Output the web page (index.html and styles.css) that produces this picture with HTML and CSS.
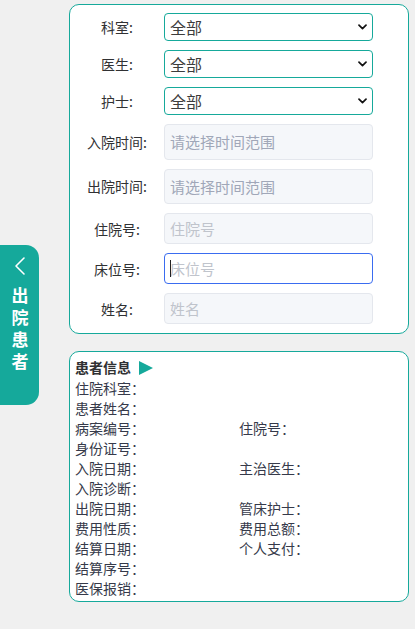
FILE: index.html
```html
<!DOCTYPE html>
<html lang="zh-CN">
<head>
<meta charset="utf-8">
<title>出院患者</title>
<link rel="stylesheet" href="styles.css">
</head>
<body>
<aside class="drawer-tab">
  <svg class="drawer-tab__icon" width="12" height="20" viewBox="0 0 12 20" aria-hidden="true">
    <polyline points="10,2 2,10 10,18" fill="none" stroke="#fff" stroke-width="1.6" stroke-linecap="round" stroke-linejoin="round"/>
  </svg>
  <div class="drawer-tab__text">出院患者</div>
</aside>

<main class="page">
  <form class="card filter">
    <label class="filter__label">科室:</label>
    <select class="filter__select"><option>全部</option></select>

    <label class="filter__label">医生:</label>
    <select class="filter__select"><option>全部</option></select>

    <label class="filter__label">护士:</label>
    <select class="filter__select"><option>全部</option></select>

    <label class="filter__label">入院时间:</label>
    <input class="filter__input filter__input--range" placeholder="请选择时间范围">

    <label class="filter__label">出院时间:</label>
    <input class="filter__input filter__input--range" placeholder="请选择时间范围">

    <label class="filter__label">住院号:</label>
    <input class="filter__input" placeholder="住院号">

    <label class="filter__label">床位号:</label>
    <span class="filter__field">
      <input class="filter__input filter__input--active" placeholder="床位号">
      <span class="filter__caret"></span>
    </span>

    <label class="filter__label">姓名:</label>
    <input class="filter__input" placeholder="姓名">
  </form>

  <section class="card info">
    <h3 class="info__title">患者信息 <span class="info__arrow"></span></h3>
    <div class="info__grid">
      <div class="info__item info__item--wide">住院科室：</div>
      <div class="info__item info__item--wide">患者姓名：</div>
      <div class="info__item">病案编号：</div>
      <div class="info__item">住院号：</div>
      <div class="info__item info__item--wide">身份证号：</div>
      <div class="info__item">入院日期：</div>
      <div class="info__item">主治医生：</div>
      <div class="info__item info__item--wide">入院诊断：</div>
      <div class="info__item">出院日期：</div>
      <div class="info__item">管床护士：</div>
      <div class="info__item">费用性质：</div>
      <div class="info__item">费用总额：</div>
      <div class="info__item">结算日期：</div>
      <div class="info__item">个人支付：</div>
      <div class="info__item info__item--wide">结算序号：</div>
      <div class="info__item info__item--wide">医保报销：</div>
    </div>
  </section>
</main>
</body>
</html>
```

FILE: styles.css
```css
* {
  box-sizing: border-box;
}

html,
body {
  margin: 0;
  padding: 0;
  background: #f0f0f0;
  font-family: "Noto Sans CJK SC", "Noto Sans", sans-serif;
  font-size: 14px;
  color: #303133;
}

/* side drawer toggle */
.drawer-tab {
  position: fixed;
  left: 0;
  top: 245px;
  width: 39px;
  height: 160px;
  background: #15a99b;
  border-radius: 0 13px 13px 0;
  display: flex;
  flex-direction: column;
  align-items: center;
  padding-top: 11px;
}

.drawer-tab__icon {
  display: block;
  margin-left: 1px;
}

.drawer-tab__text {
  writing-mode: vertical-rl;
  text-orientation: upright;
  margin-top: 11px;
  color: #fff;
  font-weight: 700;
  font-size: 17px;
  line-height: 20px;
  letter-spacing: 5px;
}

/* main column */
.page {
  padding: 4px 0 0 69px;
  width: 409px;
  display: flex;
  flex-direction: column;
  gap: 17px;
}

.card {
  background: #fff;
  border: 1px solid #16a99b;
  border-radius: 10px;
}

/* filter form */
.filter {
  margin: 0;
  padding: 8px 0 9px 0;
  display: grid;
  grid-template-columns: 94px 209px;
  row-gap: 9px;
  align-items: center;
}

.filter__label {
  text-align: center;
  color: #303133;
  line-height: 20px;
}

.filter__select {
  -webkit-appearance: none;
  appearance: none;
  height: 28px;
  width: 209px;
  border: 1px solid #16a99b;
  border-radius: 4px;
  background: #fff url("data:image/svg+xml,%3Csvg xmlns='http://www.w3.org/2000/svg' width='9' height='6' viewBox='0 0 9 6'%3E%3Cpolyline points='1,1.2 4.5,4.6 8,1.2' fill='none' stroke='%23111' stroke-width='1.7' stroke-linecap='round' stroke-linejoin='round'/%3E%3C/svg%3E") no-repeat right 5px center;
  color: #3c3c3c;
  font-family: inherit;
  font-size: 16px;
  line-height: 26px;
  padding: 0 20px 0 5px;
  margin: 0;
}

.filter__input {
  display: block;
  width: 209px;
  height: 31px;
  margin: 0;
  padding: 0 5px;
  border: 1px solid #e4e7ed;
  border-radius: 4px;
  background: #f5f7fa;
  font-family: inherit;
  font-size: 15px;
  color: #303133;
  outline: none;
}

.filter__input::placeholder {
  color: #c0c4cc;
}

.filter__input--range {
  height: 35.5px;
}

.filter__input--range::placeholder {
  color: #a0a7b8;
}

.filter__field {
  position: relative;
  display: block;
}

.filter__input--active {
  background: #fff;
  border-color: #3a6cf0;
}

.filter__caret {
  position: absolute;
  left: 6px;
  top: 7px;
  width: 1px;
  height: 17px;
  background: #222;
}

/* patient info */
.info {
  padding: 5px 5px 3px 5px;
}

.info__title {
  margin: 0;
  font-size: 14px;
  font-weight: 700;
  line-height: 21px;
  color: #303133;
  display: flex;
  align-items: center;
}

.info__arrow {
  display: inline-block;
  width: 0;
  height: 0;
  margin-left: 8px;
  border-top: 7.5px solid transparent;
  border-bottom: 7.5px solid transparent;
  border-left: 14px solid #16a99b;
}

.info__grid {
  display: grid;
  grid-template-columns: 1fr 1fr;
}

.info__item {
  line-height: 20px;
  color: #363a4a;
}

.info__item--wide {
  grid-column: 1 / -1;
}
```
